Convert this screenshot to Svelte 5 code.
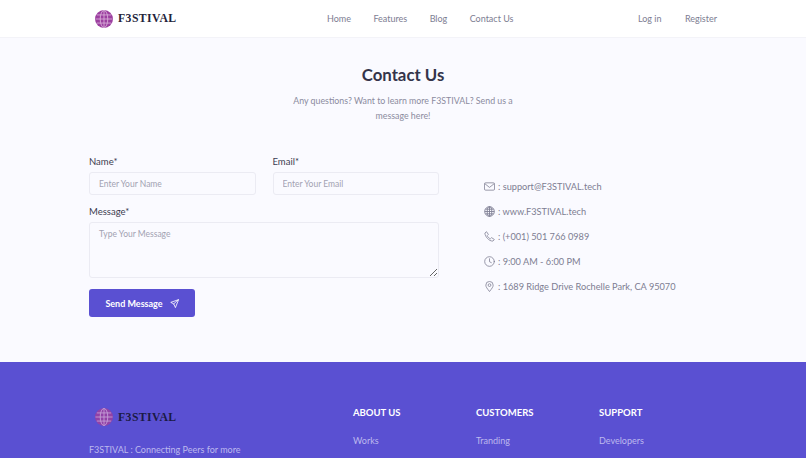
<script>
  const navLinks = ["Home", "Features", "Blog", "Contact Us"];
  const footerCols = [
    { title: "ABOUT US", link: "Works" },
    { title: "CUSTOMERS", link: "Tranding" },
    { title: "SUPPORT", link: "Developers" },
  ];
</script>

{#snippet logo()}
  <div class="logo">
    <svg width="18" height="18" viewBox="0 0 20 20" fill="none">
      <circle cx="10" cy="10" r="10" fill="#9c3fa0" />
      <g stroke="#dcb6dc" stroke-width="0.9" fill="none">
        <ellipse cx="10" cy="10" rx="4.2" ry="9.500" />
        <path d="M10 .5v19M.5 10h19M2 5.500h16M2 14.500h16" />
      </g>
    </svg>
    <span class="logo-text">F3STIVAL</span>
  </div>
{/snippet}

<div class="page">
  <header class="topbar">
    <div class="brand">{@render logo()}</div>
    <nav class="main-nav">
      {#each navLinks as link}
        <span>{link}</span>
      {/each}
    </nav>
    <nav class="auth-nav">
      <span>Log in</span>
      <span>Register</span>
    </nav>
  </header>

  <main class="content">
    <h1>Contact Us</h1>
    <p class="lead">Any questions? Want to learn more F3STIVAL? Send us a message here!</p>

    <div class="columns">
      <form class="form" onsubmit={(e) => e.preventDefault()}>
        <div class="row">
          <label>
            <span>Name*</span>
            <input type="text" placeholder="Enter Your Name" />
          </label>
          <label>
            <span>Email*</span>
            <input type="text" placeholder="Enter Your Email" />
          </label>
        </div>
        <label>
          <span>Message*</span>
          <textarea placeholder="Type Your Message"></textarea>
        </label>
        <button type="submit">
          Send Message
          <svg width="9" height="9" viewBox="0 0 24 24" fill="none" stroke="#fff" stroke-width="2.200" stroke-linejoin="round" stroke-linecap="round">
            <path d="M22 2 2 9l8 4 4 9zM22 2 10 13" />
          </svg>
        </button>
      </form>

      <ul class="info">
        <li>
          <svg width="11" height="11" viewBox="0 0 24 24" fill="none" stroke="#7d7d92" stroke-width="1.700">
            <rect x="1" y="4" width="22" height="16" rx="2.500" />
            <path d="m2 6 10 8 10-8" />
          </svg>
          <span>: support@F3STIVAL.tech</span>
        </li>
        <li>
          <svg width="11" height="11" viewBox="0 0 24 24" fill="none" stroke="#7d7d92" stroke-width="1.900">
            <circle cx="12" cy="12" r="10.500" />
            <ellipse cx="12" cy="12" rx="5" ry="10.500" />
            <path d="M12 1.500v21M1.500 12h21M3 7h18M3 17h18" />
          </svg>
          <span>: www.F3STIVAL.tech</span>
        </li>
        <li>
          <svg width="11" height="11" viewBox="0 0 24 24" fill="none" stroke="#7d7d92" stroke-width="1.700" stroke-linejoin="round">
            <path d="M2 4.500 5.500 1.500l4 6-2.500 2.500c1 3 4 6 7 7l2.500-2.500 6 4-3 3.500C11 22.500 2 12 2 4.500z" />
          </svg>
          <span>: (+001) 501 766 0989</span>
        </li>
        <li>
          <svg width="11" height="11" viewBox="0 0 24 24" fill="none" stroke="#7d7d92" stroke-width="1.700" stroke-linecap="round">
            <circle cx="12" cy="12" r="10.500" />
            <path d="M12 6v6.500l4 2" />
          </svg>
          <span>: 9:00 AM - 6:00 PM</span>
        </li>
        <li>
          <svg width="11" height="11" viewBox="0 0 24 24" fill="none" stroke="#7d7d92" stroke-width="1.700">
            <path d="M12 23C7 16.500 4 13 4 9a8 8 0 0 1 16 0c0 4-3 7.500-8 14z" />
            <circle cx="12" cy="9" r="3" />
          </svg>
          <span>: 1689 Ridge Drive Rochelle Park, CA 95070</span>
        </li>
      </ul>
    </div>
  </main>

  <footer class="footer">
    <div class="about">
      {@render logo()}
      <p>F3STIVAL : Connecting Peers for more</p>
    </div>
    {#each footerCols as col}
      <div class="col">
        <h4>{col.title}</h4>
        <span>{col.link}</span>
      </div>
    {/each}
  </footer>
</div>

<style>
  :global(body) {
    margin: 0;
    overflow: hidden;
  }
  .page {
    height: 458px;
    overflow: hidden;
    background: #fafaff;
    font-family: "Lato", "Noto Sans", sans-serif;
    color: #7d7d92;
  }
  .topbar {
    height: 38px;
    box-sizing: border-box;
    background: #fff;
    display: flex;
    align-items: center;
    padding: 0 89px 0 95px;
    font-size: 9px;
    border-bottom: 1px solid #f3f3f8;
  }
  .brand {
    width: 232px;
  }
  .logo {
    display: flex;
    align-items: center;
    gap: 5px;
  }
  .logo-text {
    font-family: "Liberation Serif", serif;
    font-weight: 700;
    font-size: 11.700px;
    letter-spacing: 0.450px;
    color: #23233a;
  }
  .main-nav {
    display: flex;
    gap: 22.400px;
  }
  .auth-nav {
    margin-left: auto;
    display: flex;
    gap: 23.400px;
  }
  .content {
    height: 324px;
    box-sizing: border-box;
    padding-top: 27px;
  }
  h1 {
    margin: 0;
    text-align: center;
    font-size: 16.800px;
    line-height: 20px;
    font-weight: 700;
    color: #34344a;
  }
  .lead {
    width: 240px;
    margin: 9px auto 0;
    text-align: center;
    font-size: 8.800px;
    line-height: 14.500px;
    color: #8b8b9e;
  }
  .columns {
    display: flex;
    margin-top: 33px;
    padding-left: 89px;
  }
  .form {
    width: 350px;
    display: flex;
    flex-direction: column;
    gap: 11px;
  }
  .row {
    display: flex;
    gap: 17px;
  }
  label {
    flex: 1;
    display: flex;
    flex-direction: column;
    gap: 5px;
    font-size: 9.500px;
    color: #3c3c50;
  }
  input,
  textarea {
    box-sizing: border-box;
    width: 100%;
    font: inherit;
    font-size: 8.500px;
    padding: 0 9px;
    background: transparent;
    border: 1px solid #ebebf3;
    border-radius: 3px;
    outline: none;
  }
  input {
    height: 23px;
  }
  textarea {
    height: 56px;
    padding-top: 6px;
    display: block;
  }
  input::placeholder,
  textarea::placeholder {
    color: #a2a2b2;
  }
  button {
    width: 106px;
    height: 28px;
    display: flex;
    align-items: center;
    justify-content: center;
    gap: 7px;
    background: #5a50d2;
    color: #fff;
    border: none;
    border-radius: 3px;
    font: inherit;
    font-size: 9px;
    font-weight: 700;
  }
  .info {
    list-style: none;
    margin: 23px 0 0 45px;
    padding: 0;
    display: flex;
    flex-direction: column;
    gap: 11.200px;
    font-size: 9.200px;
  }
  .info li {
    display: flex;
    align-items: center;
    gap: 3px;
    height: 14px;
  }
  .footer {
    height: 96px;
    background: #5a50d2;
    display: flex;
    padding: 45px 0 0 89px;
    box-sizing: border-box;
    color: #bdb9ee;
    font-size: 9px;
  }
  .about {
    width: 264px;
  }
  .about .logo {
    margin: 1px 0 0 6px;
  }
  .about .logo-text {
    color: #1a1a45;
  }
  .about .logo svg {
    opacity: 0.85;
  }
  .about p {
    margin: 18px 0 0;
  }
  .col {
    width: 123px;
  }
  .col h4 {
    margin: 0 0 17px;
    font-size: 9.500px;
    font-weight: 700;
    color: #fff;
  }
</style>
